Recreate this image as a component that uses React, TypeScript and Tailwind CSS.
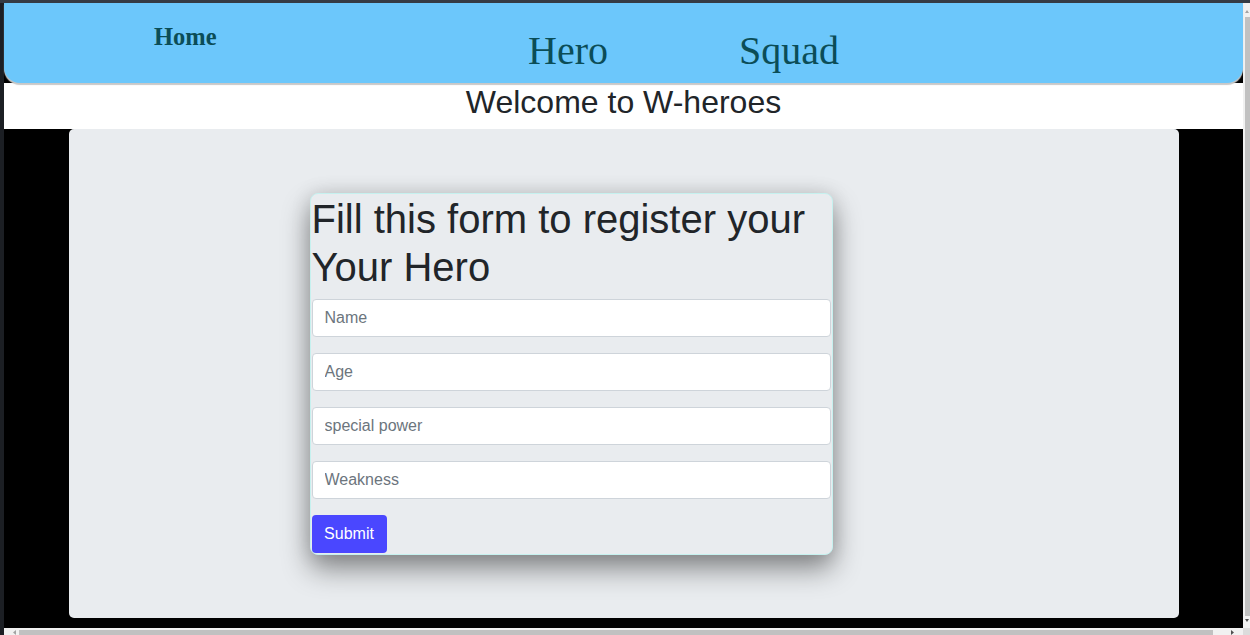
export default function App() {
  const fields = ["Name", "Age", "special power", "Weakness"];

  return (
    <div className="w-[1250px] h-[635px] overflow-hidden bg-[#1c1f24] flex flex-col font-['Liberation_Sans',Arial,sans-serif]">
      {/* window frame top */}
      <div className="h-[3px] shrink-0 bg-[#353b44]" />

      <div className="flex flex-1 min-h-0">
        <div className="w-[4px] shrink-0 bg-[#1c1f24]" />

        <div className="flex-1 min-w-0 flex flex-col bg-black">
          {/* Navbar */}
          <nav className="relative z-10 h-[80px] shrink-0 flex items-start bg-[#6cc7fb] rounded-b-[16px] shadow-[0_2px_1px_#c8c8c8] text-[#0b4d57] font-['Liberation_Serif','Times_New_Roman',serif]">
            <div className="w-[524px] pl-[150px] pt-[22px]">
              <a className="text-[24.5px] leading-[24px] font-bold">Home</a>
            </div>
            <div className="w-[211px] pt-[28px]">
              <a className="text-[40px] leading-[40px]">Hero</a>
            </div>
            <div className="pt-[28px]">
              <a className="text-[40px] leading-[40px]">Squad</a>
            </div>
          </nav>

          {/* Title */}
          <div className="h-[46px] shrink-0 bg-white text-center text-[32px] leading-[38px] text-[#212529]">
            Welcome to W-heroes
          </div>

          {/* Jumbotron */}
          <div className="flex-1">
            <div className="mx-auto w-[1110px] h-[489px] bg-[#e9ecef] rounded-[5px] pt-[64px] pl-[241px]">
              <form className="w-[523px] p-px bg-[#e9ecef] border border-[#c6f1ef] rounded-[8px] shadow-[0_14px_28px_rgba(0,0,0,0.42),0_0_20px_rgba(0,0,0,0.12)]">
                <h1 className="text-[40px] leading-[48px] text-[#212529] mb-2">
                  Fill this form to register your Your Hero
                </h1>
                {fields.map((f) => (
                  <input
                    key={f}
                    placeholder={f}
                    className="block w-full h-[38px] mb-4 px-3 bg-white border border-[#ced4da] rounded-[4px] text-[16px] text-[#495057] placeholder:text-[#6c757d] outline-none"
                  />
                ))}
                <button
                  type="button"
                  className="w-[75px] h-[38px] rounded-[4px] bg-[#4a47ff] text-white text-[16px]"
                >
                  Submit
                </button>
              </form>
            </div>
          </div>
        </div>

        {/* vertical scrollbar */}
        <div className="w-[7px] shrink-0 bg-[#f1f1f1] flex flex-col items-center">
          <svg width="6" height="14" viewBox="0 0 6 14" className="shrink-0">
            <path d="M1 10 L5 10 L3 7 Z" fill="#a3a3a3" />
          </svg>
          <div className="w-[5px] flex-1 ml-[1px] bg-[#c1c1c1]" />
          <svg width="6" height="12" viewBox="0 0 6 12" className="shrink-0">
            <path d="M1 3 L5 3 L3 6 Z" fill="#505050" />
          </svg>
        </div>
      </div>

      {/* horizontal scrollbar */}
      <div className="h-[7px] shrink-0 flex bg-[#f1f1f1]">
        <div className="w-[4px] bg-[#1c1f24]" />
        <svg width="15" height="7" viewBox="0 0 15 7" className="shrink-0">
          <path d="M12 2 L12 7 L9 4.5 Z" fill="#a3a3a3" />
        </svg>
        <div className="w-[1194px] mt-[2px] bg-[#c1c1c1]" />
        <div className="flex-1 flex justify-end">
          <svg width="14" height="7" viewBox="0 0 14 7">
            <path d="M2 2 L2 7 L5 4.5 Z" fill="#505050" />
          </svg>
        </div>
        <div className="w-[7px] bg-[#dcdcdc]" />
      </div>
    </div>
  );
}
